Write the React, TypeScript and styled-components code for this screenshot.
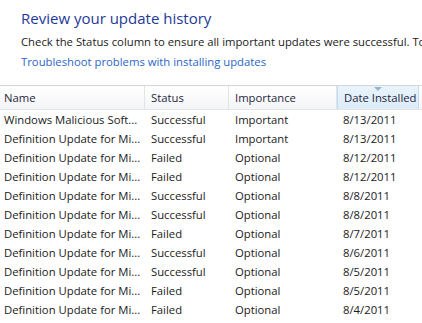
import styled, { createGlobalStyle } from "styled-components";

const GlobalStyle = createGlobalStyle`
  body {
    margin: 0;
    background: #ffffff;
    font-family: "Open Sans", "Noto Sans", sans-serif;
  }
`;

const Page = styled.div`
  width: 422px;
  height: 323px;
  overflow: hidden;
  background: #ffffff;
`;

const Intro = styled.div`
  padding: 7px 0 0 21px;
  height: 78px;
  box-sizing: border-box;
`;

const Title = styled.h1`
  margin: 0;
  font-size: 15px;
  font-weight: 400;
  color: #1e3996;
  line-height: 22px;
  white-space: nowrap;
`;

const Text = styled.p`
  margin: 3px 0 0 0;
  font-size: 11.3px;
  color: #1a1a1a;
  line-height: 20px;
  white-space: nowrap;
  overflow: hidden;
`;

const Link = styled.a`
  display: block;
  font-size: 11.3px;
  color: #2a66c8;
  line-height: 20px;
  text-decoration: none;
  white-space: nowrap;
`;

const cols = "145px 84px 108px 82px 1fr";

const HeaderRow = styled.div`
  display: grid;
  grid-template-columns: ${cols};
  height: 23px;
  margin-top: 7px;
  border-top: 1px solid #d5d5d5;
  border-bottom: 1px solid #e5e5e5;
  background: linear-gradient(#ffffff, #f4f5f7);
`;

const HeaderCell = styled.div<{ $sorted?: boolean; $first?: boolean }>`
  position: relative;
  display: flex;
  align-items: center;
  padding-left: ${(p) => (p.$first ? 4 : 6)}px;
  font-size: 11.3px;
  color: #1e2640;
  border-right: 1px solid #e2e3e5;
  white-space: nowrap;
  ${(p) =>
    p.$sorted &&
    `
    background: linear-gradient(#e9f4fc, #dcecf9);
    border: 1px solid #c0dcf3;
    border-top: none;
    border-bottom: none;
  `}
`;

const SortArrow = styled.span`
  position: absolute;
  top: 1px;
  left: 50%;
  margin-left: -4px;
  width: 0;
  height: 0;
  border-left: 4px solid transparent;
  border-right: 4px solid transparent;
  border-top: 4px solid #97b4cf;
`;

const Row = styled.div`
  display: grid;
  grid-template-columns: ${cols};
  height: 19px;
  align-items: center;
`;

const Cell = styled.div<{ $first?: boolean }>`
  padding-left: ${(p) => (p.$first ? 4 : 6)}px;
  font-size: 11.3px;
  color: #1a1a1a;
  white-space: nowrap;
`;

const data: [string, string, string, string][] = [
  ["Windows Malicious Soft...", "Successful", "Important", "8/13/2011"],
  ["Definition Update for Mi...", "Successful", "Important", "8/13/2011"],
  ["Definition Update for Mi...", "Failed", "Optional", "8/12/2011"],
  ["Definition Update for Mi...", "Failed", "Optional", "8/12/2011"],
  ["Definition Update for Mi...", "Successful", "Optional", "8/8/2011"],
  ["Definition Update for Mi...", "Successful", "Optional", "8/8/2011"],
  ["Definition Update for Mi...", "Failed", "Optional", "8/7/2011"],
  ["Definition Update for Mi...", "Successful", "Optional", "8/6/2011"],
  ["Definition Update for Mi...", "Successful", "Optional", "8/5/2011"],
  ["Definition Update for Mi...", "Failed", "Optional", "8/5/2011"],
  ["Definition Update for Mi...", "Failed", "Optional", "8/4/2011"],
];

export default function App() {
  return (
    <Page>
      <GlobalStyle />
      <Intro>
        <Title>Review your update history</Title>
        <Text>
          Check the Status column to ensure all important updates were successful. To
        </Text>
        <Link href="#">Troubleshoot problems with installing updates</Link>
      </Intro>
      <HeaderRow>
        <HeaderCell $first>Name</HeaderCell>
        <HeaderCell>Status</HeaderCell>
        <HeaderCell>Importance</HeaderCell>
        <HeaderCell $sorted>
          <SortArrow />
          Date Installed
        </HeaderCell>
        <HeaderCell />
      </HeaderRow>
      {data.map((r, i) => (
        <Row key={i}>
          <Cell $first>{r[0]}</Cell>
          <Cell>{r[1]}</Cell>
          <Cell>{r[2]}</Cell>
          <Cell>{r[3]}</Cell>
          <Cell />
        </Row>
      ))}
    </Page>
  );
}
